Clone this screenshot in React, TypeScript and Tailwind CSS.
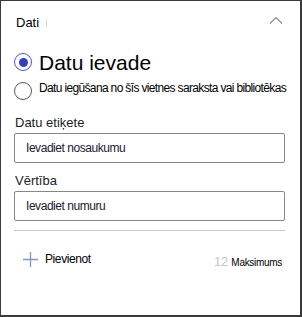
const font = { fontFamily: '"Liberation Sans", Arial, sans-serif' };

const Radio = ({ checked }: { checked?: boolean }) => (
  <span
    className={`flex h-[18px] w-[18px] shrink-0 items-center justify-center rounded-full border ${
      checked ? "border-[#4a58c8] border-[1.5px]" : "border-[#5a5a5a]"
    }`}
  >
    {checked && <span className="h-[9px] w-[9px] rounded-full bg-[#3343b5]" />}
  </span>
);

const Field = ({
  label,
  placeholder,
  className,
}: {
  label: string;
  placeholder: string;
  className: string;
}) => (
  <div className={className}>
    <p className="pl-px text-[13px] leading-4 text-[#201f1e]">{label}</p>
    <div className="mt-[2px] flex h-[30px] items-center rounded-[2px] border border-[#8a8886] pl-[11px]">
      <span className="text-[12px] leading-4 tracking-[-0.45px] text-[#1b1a2e]">
        {placeholder}
      </span>
    </div>
  </div>
);

export default function App() {
  return (
    <div
      style={font}
      className="h-[317px] w-[302px] border-t border-l border-r-2 border-b-2 border-[#3b3b3b] bg-white"
    >
      <div className="flex items-start justify-between pt-[14px] pr-[17px] pl-[15px]">
        <div className="flex items-center">
          <span className="text-[13px] leading-4 text-black">Dati</span>
          <span className="ml-[7px] h-[8px] w-px bg-[#d8d8d8]" />
        </div>
        <svg width="14" height="8" viewBox="0 0 14 8" className="mt-[1px]">
          <path d="M1 7.5 L7 1.5 L13 7.5" fill="none" stroke="#8c8c8c" strokeWidth="1.1" />
        </svg>
      </div>

      <div className="pr-[15px] pl-[13px]">
        <div className="mt-[20px] flex items-start">
          <span className="mt-[2px]">
            <Radio checked />
          </span>
          <span className="ml-[7px] text-[21px] leading-6 text-black">Datu ievade</span>
        </div>
        <div className="mt-[5px] flex items-start">
          <span className="mt-[2px]">
            <Radio />
          </span>
          <span className="ml-[7px] text-[12px] leading-4 tracking-[-0.65px] whitespace-nowrap text-black">
            Datu iegūšana no šīs vietnes saraksta vai bibliotēkas
          </span>
        </div>

        <Field className="mt-[15px]" label="Datu etiķete" placeholder="Ievadiet nosaukumu" />
        <Field className="mt-[10px]" label="Vērtība" placeholder="Ievadiet numuru" />

        <div className="mt-[9px] h-px bg-[#c8c6c4]" />

        <div className="mt-[20px] flex items-start justify-between">
          <div className="flex items-center pl-[9px]">
            <svg width="15" height="15" viewBox="0 0 15 15">
              <path d="M7.5 0 V15 M0 7.5 H15" stroke="#8890c8" strokeWidth="1.3" />
            </svg>
            <span className="ml-[7px] text-[12px] leading-4 tracking-[-0.4px] text-black">
              Pievienot
            </span>
          </div>
          <div className="mt-[3px] flex items-baseline pr-[3px]">
            <span className="text-[13px] leading-4 text-[#c8c6c4]">12</span>
            <span className="ml-[3px] text-[10px] leading-4 tracking-[-0.3px] text-black">
              Maksimums
            </span>
          </div>
        </div>
      </div>
    </div>
  );
}
